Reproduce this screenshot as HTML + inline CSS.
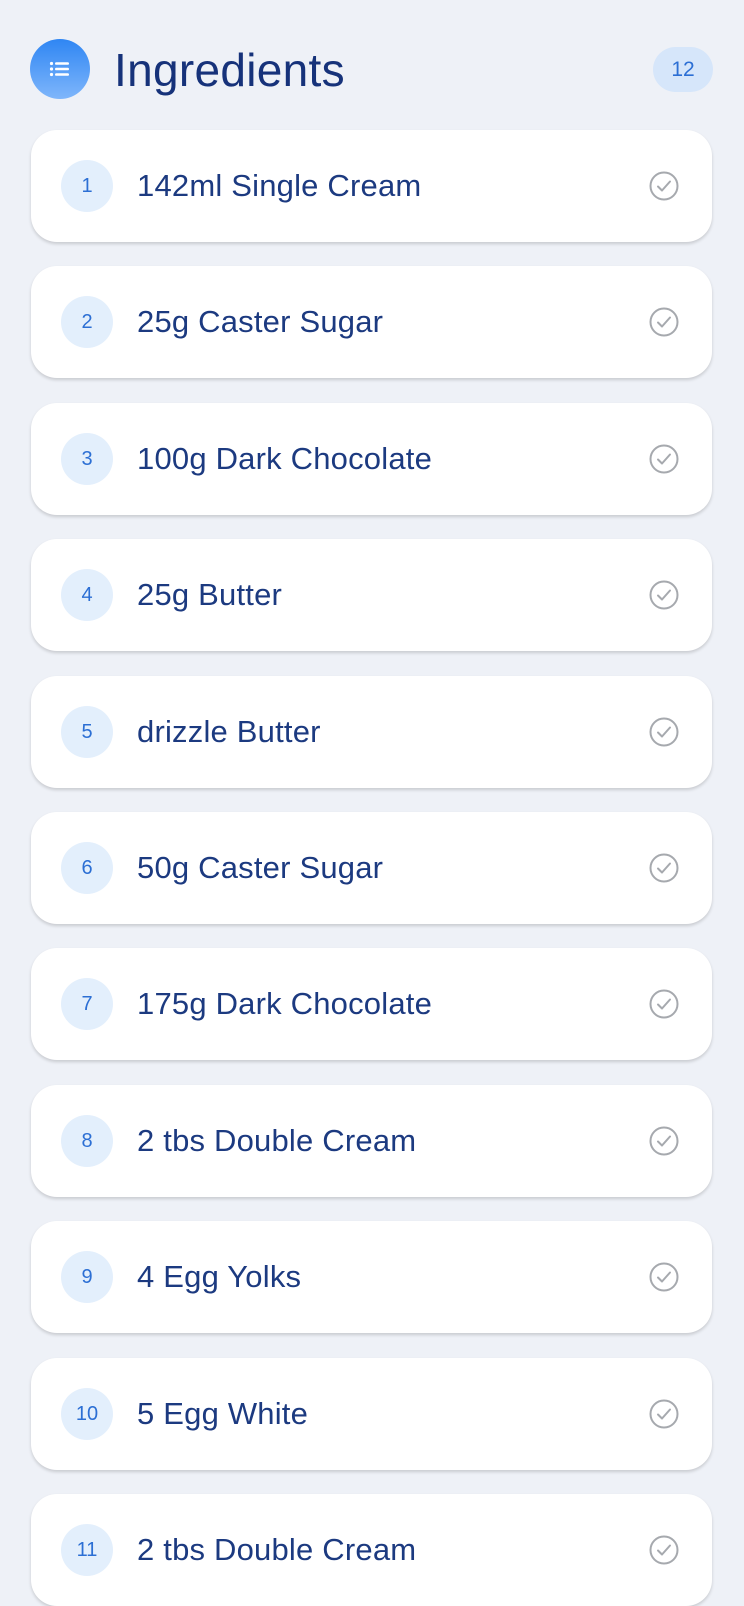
<!DOCTYPE html>
<html><head><style>
body{margin:0;width:744px;height:1600px;background:#eef1f7;font-family:"Liberation Sans",sans-serif;overflow:hidden;position:relative}
.hdr-ic{position:absolute;left:30px;top:39px;width:60px;height:60px;border-radius:50%;background:linear-gradient(180deg,#2f86f3,#7fb6fb)}
.title{position:absolute;left:114px;top:44px;font-size:46px;color:#16327a;letter-spacing:0.3px;line-height:52px}
.badge{position:absolute;left:653px;top:47px;width:60px;height:45px;border-radius:23px;background:#d6e6fa;color:#2c6fd4;font-size:21px;text-align:center;line-height:45px}
.card{position:absolute;left:31px;width:681px;height:112px;background:#fff;border-radius:26px;box-shadow:0 2px 3px rgba(0,0,0,.16)}
.num{position:absolute;left:30px;top:30px;width:52px;height:52px;border-radius:50%;background:#e3effc;color:#2c6fd4;font-size:20px;text-align:center;line-height:52px}
.txt{position:absolute;left:106px;top:0;line-height:112px;font-size:31px;letter-spacing:0.2px;color:#1c3a80}
.chk{position:absolute;left:618px;top:41px}
</style></head><body>
<div class="hdr-ic"><svg width="60" height="60" viewBox="0 0 60 60"><g fill="#fff"><circle cx="21.5" cy="24.5" r="1.6"/><circle cx="21.5" cy="30" r="1.6"/><circle cx="21.5" cy="35.5" r="1.6"/><rect x="25" y="23.2" width="14" height="2.6" rx="1.3"/><rect x="25" y="28.7" width="14" height="2.6" rx="1.3"/><rect x="25" y="34.2" width="14" height="2.6" rx="1.3"/></g></svg></div>
<div class="title">Ingredients</div>
<div class="badge">12</div>
<div id="list"></div>
<script>
var items=["142ml Single Cream","25g Caster Sugar","100g Dark Chocolate","25g Butter","drizzle Butter","50g Caster Sugar","175g Dark Chocolate","2 tbs Double Cream","4 Egg Yolks","5 Egg White","2 tbs Double Cream"];
var h="";items.forEach(function(t,i){h+='<div class="card" style="top:'+(130+i*136.4)+'px"><div class="num">'+(i+1)+'</div><div class="txt">'+t+'</div><svg class="chk" width="30" height="30" viewBox="0 0 30 30"><circle cx="15" cy="15" r="13.5" fill="none" stroke="#a6a9ae" stroke-width="2"/><path d="M9 15.5l4 4 8-9" fill="none" stroke="#a6a9ae" stroke-width="2" stroke-linecap="round" stroke-linejoin="round"/></svg></div>';});
document.getElementById("list").innerHTML=h;
</script>
</body></html>
